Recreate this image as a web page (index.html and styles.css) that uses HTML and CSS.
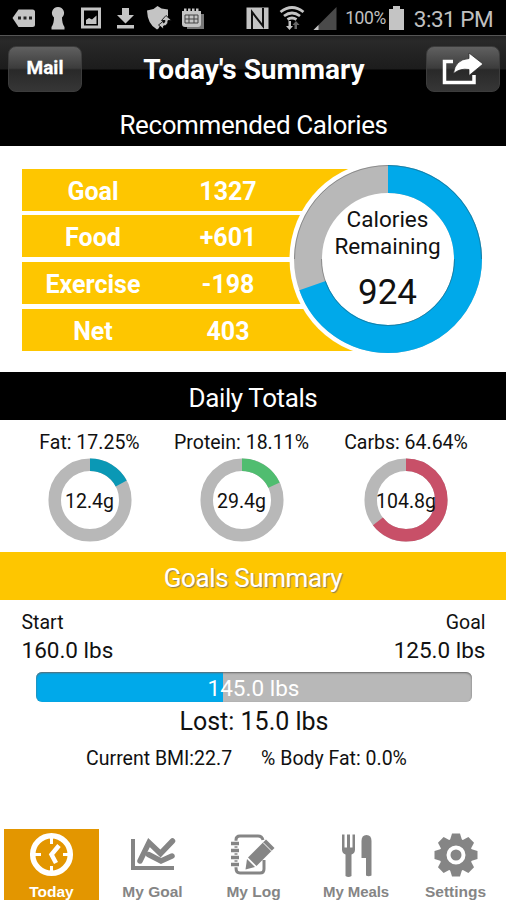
FILE: index.html
```
<!DOCTYPE html>
<html lang="en">
<head>
<meta charset="utf-8">
<title>Today's Summary</title>
<link rel="stylesheet" href="styles.css">
</head>
<body>
<div class="app">
  <div class="status">
    <svg class="status-icons" width="210" height="35" viewBox="0 0 210 35" fill="#c4c4c4">
      <path d="M12.500 18l6-8.500h14q2.500 0 2.500 2.500v12.500q0 2.500-2.500 2.500h-14z"/>
      <path fill="#222" d="M18 16.500h3v3h-3zM23.500 16.500h3v3h-3zM29 16.500h3v3h-3z"/>
      <path d="M58 7a6 6 0 0 1 4 10.500q0 6 2.500 9.500v2.500h-13v-2.500q2.500-3.500 2.500-9.500a6 6 0 0 1 4-10.500z"/>
      <path fill-rule="evenodd" d="M81 7.500h20v21h-20zM84 10.500v15h14v-15z"/>
      <path d="M86 24v-4l3-2 3 1.500 4.500-4v8.500z"/>
      <path d="M122 8h7v7h5l-8.500 8.500-8.500-8.500h5zM117 25h17v3.500h-17z"/>
      <path d="M157.500 6l4 2.500 6.500 1v7l-4 2-5.500 10-1.500 1q-9.500-5-10-19l6.500-1.500z"/>
      <path stroke="#000" stroke-width=".8" d="M166 15.500l5.500 5h-3.500q0 5-4.500 5.500v3l-5-4 5-4v2q1.500-.5 1.500-2.500h-3.500z"/>
      <path d="M187 14h17v15h-17z" fill="#777"/>
      <path d="M182 11h19v13q0 3-3 3h-13q-3 0-3-3zM184 8.500h2.500v3h-2.500zM188 8.500h2.500v3h-2.500zM192 8.500h2.500v3h-2.500zM196 8.500h2.500v3h-2.500z"/>
      <path d="M185 15h13v8h-13zM185 19h13M189 15v8M194 15v8" fill="none" stroke="#444" stroke-width="1"/>
    </svg>
    <div class="status-right">
      <svg width="96" height="35" viewBox="0 0 96 35" fill="#c4c4c4">
        <path d="M1.500 7.500h22v21.500h-22z"/>
        <path d="M7 29v-17l11 14v-18" fill="none" stroke="#111" stroke-width="2"/>
        <path d="M35.500 12q11.500-9 23 0M39 16q8-6 16 0M42.500 19.500q4.500-3 9 0" fill="none" stroke="#c4c4c4" stroke-width="2.800"/>
        <path d="M43.500 21h2.500v5h2l-3.500 4-3.500-4h2.500z"/>
        <path fill="#666" d="M52 29h-2.500v-4h-2l3.500-4 3.500 4h-2.500z"/>
        <path fill="#4a4a4a" d="M68.500 30l23-23v23z"/><path d="M68.500 30l5-5v5z"/>
      </svg>
      <span class="percent">100%</span>
      <svg width="16" height="35" viewBox="0 0 16 35" fill="#c4c4c4"><path d="M4 6h7v3h4v21h-15v-21h4z"/></svg>
      <span class="clock">3:31 PM</span>
    </div>
  </div>
  <header class="header">
    <button class="btn mail">Mail</button>
    <h1>Today's Summary</h1>
    <button class="btn" aria-label="Share">
      <svg width="44" height="36" viewBox="0 0 44 36"><path d="M14 12.500h-8.500v21h29.500v-7.500" fill="none" stroke="#fff" stroke-width="3.500"/><path d="M14.500 24.500q1.500-14 15.500-15v-5.500l14 11-14 11.500v-6q-9-1.500-15.500 4z" fill="#fff" stroke="#222" stroke-width=".7"/></svg>
    </button>
  </header>
  <h2 class="section-title rec"><span>Recommended Calories</span></h2>
  <section class="calories">
    <div class="rows">
      <div class="row"><span>Goal</span><span>1327</span></div>
      <div class="row"><span>Food</span><span>+601</span></div>
      <div class="row"><span>Exercise</span><span>-198</span></div>
      <div class="row"><span>Net</span><span>403</span></div>
    </div>
    <div class="big-donut">
      <svg width="198" height="198" viewBox="-99 -99 198 198">
        <circle r="98.500" fill="#fff"/>
        <circle r="80" fill="none" stroke="#b8b8b8" stroke-width="28"/>
        <circle r="80" fill="none" stroke="#00a9ea" stroke-width="28" pathLength="100" stroke-dasharray="69.600 30.400" transform="rotate(-90)"/>
        <path d="M-93.500 0a93.500 93.500 0 0 1 187 0M-66.500 0a66.500 66.500 0 0 0 133 0" fill="none" stroke="#333" stroke-opacity=".35"/>
      </svg>
      <div class="big-label"><span>Calories</span><span>Remaining</span><strong>924</strong></div>
    </div>
  </section>
  <h2 class="section-title daily"><span>Daily Totals</span></h2>
  <section class="macros">
    <div class="macro"><span class="macro-name">Fat: 17.25%</span>
      <div class="donut"><svg width="84" height="84" viewBox="-42 -42 84 84"><circle r="35.300" class="track"/><circle r="35.300" class="arc" stroke="#0a98b5" pathLength="100" stroke-dasharray="17.250 82.750" transform="rotate(-90)"/></svg><span>12.4g</span></div></div>
    <div class="macro"><span class="macro-name">Protein: 18.11%</span>
      <div class="donut"><svg width="84" height="84" viewBox="-42 -42 84 84"><circle r="35.300" class="track"/><circle r="35.300" class="arc" stroke="#50bd70" pathLength="100" stroke-dasharray="18.110 81.890" transform="rotate(-90)"/></svg><span>29.4g</span></div></div>
    <div class="macro"><span class="macro-name">Carbs: 64.64%</span>
      <div class="donut"><svg width="84" height="84" viewBox="-42 -42 84 84"><circle r="35.300" class="track"/><circle r="35.300" class="arc" stroke="#c85068" pathLength="100" stroke-dasharray="64.640 35.360" transform="rotate(-90)"/></svg><span>104.8g</span></div></div>
  </section>
  <h2 class="section-title goals"><span>Goals Summary</span></h2>
  <section class="progress">
    <div class="ends small"><span>Start</span><span>Goal</span></div>
    <div class="ends"><span>160.0 lbs</span><span>125.0 lbs</span></div>
    <div class="bar"><span>145.0 lbs</span></div>
    <div class="lost"><span>Lost: 15.0 lbs</span></div>
    <div class="stats"><span>Current BMI:22.7</span><span>% Body Fat: 0.0%</span></div>
  </section>
  <nav class="tabs">
    <a class="tab active"><svg width="46" height="46" viewBox="0 0 46 46" fill="none" stroke="#fff"><circle cx="22.500" cy="22.500" r="18.800" stroke-width="5.500"/><path d="M22.500 6v6M22.500 34v5M6 22.500h6M34 22.500h5" stroke-width="3"/><path d="M30 13.500l-7.500 9 4.500 8.500" stroke-width="4.500"/></svg><span>Today</span></a>
    <a class="tab"><svg width="46" height="46" viewBox="0 0 46 46" fill="none" stroke="#858585" stroke-linejoin="miter"><path d="M3 7v29h41" stroke-width="4"/><path d="M10 29l9-18.500 11.500 11 12-12.500" stroke-width="5.500" stroke-linecap="round"/><path d="M18.500 22.500l12.500 6.500 11-5" stroke-width="5.500" stroke-linecap="round"/></svg><span>My Goal</span></a>
    <a class="tab"><svg width="46" height="46" viewBox="0 0 46 46" fill="none" stroke="#858585"><path d="M5 8q0-4 4-4h18q4 0 5 4M5 36q0 5 4 5h20q4 0 4-4v-9M5 8v28" stroke-width="3"/><path d="M0 11.500h8M0 18.500h8M0 25.500h8M0 32.500h8" stroke="#fff" stroke-width="5.500"/><path d="M0 11.500h8M0 18.500h8M0 25.500h8M0 32.500h8" stroke-width="3.700"/><path d="M35 7.500l8.500 8.500-18 18-8.500-8.500z" fill="#858585" stroke="none"/><path d="M16 27l8 8-9.500 2.500z" fill="#858585" stroke="none"/><path d="M32 10.500l8.500 8.500" stroke="#fff"/></svg><span>My Log</span></a>
    <a class="tab"><svg width="46" height="46" viewBox="0 0 46 46" fill="#858585"><path d="M10 2.500h2.500v13h2.500v-13h3v13h2.500v-13h2.500v15q0 4-3.500 5v21.500q-3 2-6 0v-21.500q-3.500-1-3.500-5zM29.500 9q0-6 5-6t5 6v34.500q-3 1.500-5.500 0v-17.500h-4.500z"/></svg><span class="meals">My Meals</span></a>
    <a class="tab"><svg width="46" height="46" viewBox="-23 -23 46 46"><g fill="#858585"><circle r="16.500"/><path id="tooth" d="M-6-15l2-6.500h8l2 6.500v30l-2 6.500h-8l-2-6.500z"/><use href="#tooth" transform="rotate(45)"/><use href="#tooth" transform="rotate(90)"/><use href="#tooth" transform="rotate(135)"/></g><circle r="7.500" fill="#858585" stroke="#fff" stroke-width="4"/></svg><span>Settings</span></a>
  </nav>
</div>
</body>
</html>
```
FILE: styles.css
```
* { box-sizing: border-box; }
body { margin: 0; background: #fff; color: #111; font-family: Roboto, "Liberation Sans", sans-serif; }
.app { width: 506px; height: 900px; display: flex; flex-direction: column; overflow: hidden; }
svg { display: block; flex: none; }
span { white-space: nowrap; }
.status { height: 35px; background: #000; display: flex; justify-content: space-between; color: #c0c0c0; }
.status-right { display: flex; align-items: center; padding-right: 12px; }
.percent { font-size: 17.500px; width: 47px; margin-left: 1px; text-align: center; letter-spacing: -.4px; padding-top: 1px; }
.clock { font-size: 22.500px; width: 81px; margin-left: 8px; text-align: center; letter-spacing: -.5px; padding-top: 2px; }
.header { height: 67px; padding: 11px 6px 0 8px; display: flex; justify-content: space-between; align-items: flex-start; background: linear-gradient(#222 0, #292929 5px, #1c1c1c 33px, #000 34px); border-top: 1px solid #555; }
h1 { margin: 4px 0 0; color: #fff; font-size: 28px; line-height: 37px; font-weight: 700; white-space: nowrap; }
.btn { width: 74px; height: 46px; margin-top: -1px; border: 1px solid #3c3c3c; border-radius: 8px; padding: 0; background: linear-gradient(#606060, #3c3c3c 48%, #292929 52%, #363636); color: #fff; font: 700 19px Roboto, sans-serif; display: flex; align-items: center; justify-content: center; }
.btn svg { margin: -5px 0 0 -3px; }
.mail { padding-bottom: 3px; -webkit-text-stroke: .3px #fff; }
.section-title { margin: 0; flex: none; color: #fff; background: #000; text-align: center; font-size: 26px; font-weight: 400; letter-spacing: -.4px; height: 48px; line-height: 52px; }
.section-title.rec { height: 44px; line-height: 46px; padding-left: 1px; }
.section-title.goals { background: #fec600; text-shadow: 1px 1px 1px #8d7d55; line-height: 52px; }
.calories { height: 226px; padding: 22.500px 0 0 22px; display: flex; }
.rows { width: 340px; display: grid; grid-template-rows: repeat(4, 42px); row-gap: 4.700px; flex: none; height: 183px; }
.row { background: #fec600; color: #fff; display: flex; align-items: center; font-size: 25px; font-weight: 700; line-height: 42px; padding-top: 4px; }
.row span { width: 142px; text-align: center; }
.row span + span { width: 128px; }
.big-donut { display: grid; width: 198px; height: 198px; margin: -8.500px 0 0 -73.500px; flex: none; }
.big-donut > * { grid-area: 1 / 1; }
.big-label { display: flex; flex-direction: column; align-items: center; padding-top: 46px; font-size: 22.500px; line-height: 26.500px; }
.big-label strong { font-size: 35px; line-height: 40px; font-weight: 400; margin-top: 14px; }
.macros { height: 132px; display: grid; grid-template-columns: 152px 152px 177px; padding: 10px 0 0 13.500px; }
.macro { display: flex; flex-direction: column; align-items: center; }
.macro-name { font-size: 19.500px; line-height: 25px; margin-bottom: 2.500px; }
.donut { display: grid; place-items: center; font-size: 19.500px; }
.donut > * { grid-area: 1 / 1; }
.donut span { padding-top: 3px; }
.track, .arc { fill: none; stroke-width: 12.500px; }
.track { stroke: #b8b8b8; }
.progress { height: 228px; padding-top: 10px; }
.ends { display: flex; justify-content: space-between; padding: 0 20.500px 0 21.500px; font-size: 22.500px; line-height: 28px; }
.ends.small { font-size: 19.500px; line-height: 25px; margin-bottom: 1px; }
.bar { margin: 8px 34.500px 0 35.500px; height: 30px; border-radius: 6px; background: linear-gradient(90deg, #00a9ea 186.500px, #b8b8b8 186.500px); box-shadow: inset 0 1px 2px #666; color: #fff; font-size: 22.500px; line-height: 32px; text-align: center; }
.lost { font-size: 25px; line-height: 40px; text-align: center; padding-left: 2px; }
.stats { display: flex; justify-content: center; gap: 29px; font-size: 19.500px; line-height: 34px; margin-right: 13px; }
.tabs { height: 72px; display: grid; grid-template-columns: repeat(5, 95px); column-gap: 6px; padding: 1px 0 0 4px; }
.tab { height: 71px; padding-top: 3px; display: flex; flex-direction: column; align-items: center; color: #858585; font: 700 15.500px/20px "Liberation Sans", sans-serif; }
.tab span { margin-top: 4px; }
.tab .meals { font-size: 15px; letter-spacing: -.1px; margin-left: 3px; }
.tab.active { background: #e39600; color: #fff; }
```
